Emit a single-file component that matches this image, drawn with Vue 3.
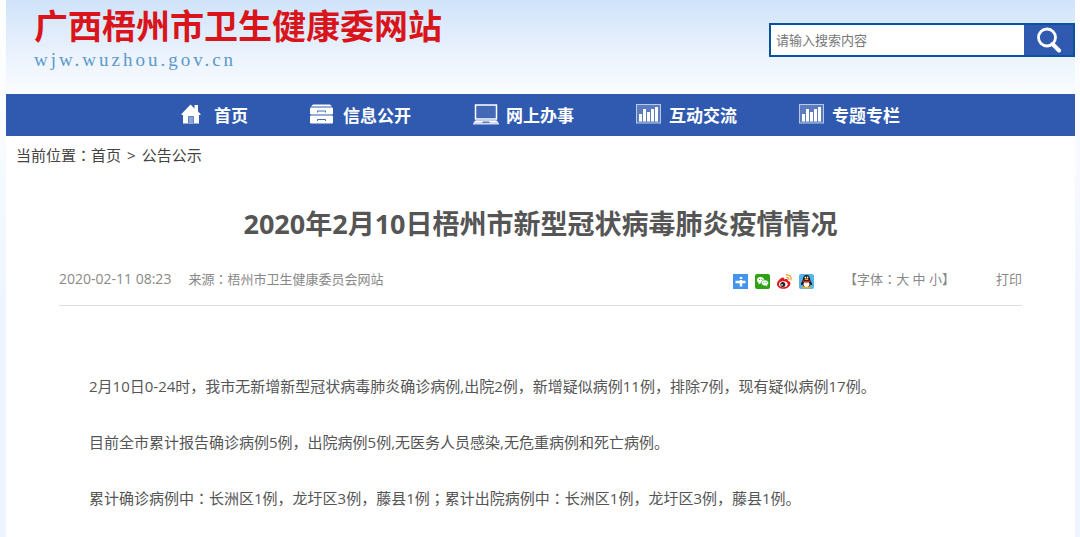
<script setup>
import { ref } from 'vue'

const keyword = ref('')
const nav = [
  { label: '首页', icon: 'home' },
  { label: '信息公开', icon: 'drawer' },
  { label: '网上办事', icon: 'laptop' },
  { label: '互动交流', icon: 'chart' },
  { label: '专题专栏', icon: 'chart' },
]
const paragraphs = [
  '2月10日0-24时，我市无新增新型冠状病毒肺炎确诊病例,出院2例，新增疑似病例11例，排除7例，现有疑似病例17例。',
  '目前全市累计报告确诊病例5例，出院病例5例,无医务人员感染,无危重病例和死亡病例。',
  '累计确诊病例中：长洲区1例，龙圩区3例，藤县1例；累计出院病例中：长洲区1例，龙圩区3例，藤县1例。',
].map((text) => text.split(/([：；])/))
</script>

<template>
  <div class="page">
    <header class="banner">
      <div class="brand">
        <h2 class="site-name">广西梧州市卫生健康委网站</h2>
        <p class="site-url">wjw.wuzhou.gov.cn</p>
      </div>
      <form class="search" @submit.prevent>
        <input v-model="keyword" type="text" aria-label="请输入搜索内容" placeholder="请输入搜索内容" />
        <button type="submit" aria-label="搜索">
          <svg width="26" height="26" viewBox="0 0 26 26" fill="none" stroke="#fff">
            <circle cx="11" cy="10.5" r="8.5" stroke-width="2.8" />
            <path d="M16.5 17l6.5 6.5" stroke-width="4" stroke-linecap="round" />
          </svg>
        </button>
      </form>
    </header>

    <nav class="nav">
      <a v-for="item in nav" :key="item.label" href="#" class="nav-item">
        <span class="nav-icon">
          <svg v-if="item.icon === 'home'" width="20" height="20" viewBox="0 0 20 20">
            <path d="M0.500 10L9.500 0.500l4 4V1h3.500v6.500l2.500 2.500v1H18v8.500H2V11H0.500z" fill="#fff" />
            <path d="M7.500 19.500V12.500h5v7" fill="#8ba3d5" stroke="#5f80c4" />
          </svg>
          <svg v-else-if="item.icon === 'drawer'" width="23" height="20" viewBox="0 0 23 20">
            <path d="M3 0.500h17l2 2H1z" fill="#fff" />
            <rect y="3.500" width="23" height="7" rx="1" fill="#fff" />
            <rect y="11.500" width="23" height="8" rx="1" fill="#fff" />
            <path d="M7.500 8.500V7h8v1.500M7.500 17V15.500h8V17" fill="none" stroke="#4568b2" />
          </svg>
          <svg v-else-if="item.icon === 'laptop'" width="26" height="21" viewBox="0 0 26 21">
            <rect x="2.500" y="1" width="21" height="14" fill="#4368b5" stroke="#fff" stroke-width="1.500" />
            <path d="M2 16.500h22l2 3v1H0v-1z" fill="#d5ddef" />
            <path d="M3 16.500h20l1 1.500H2z" fill="#fff" />
            <path d="M10 17.500h6l1 1.500H9z" fill="#5776b8" />
          </svg>
          <svg v-else width="25" height="20" viewBox="0 0 25 20">
            <rect x="0.500" y="0.500" width="24" height="18.500" fill="#5d7cc0" stroke="#b9c8e8" />
            <path d="M3 10h3v7.500H3zM7 5h3v12.500H7zM11 8h3v9.500h-3zM15 5h3v12.500h-3zM19 3h3v14.500h-3z" fill="#fff" />
          </svg>
        </span>
        {{ item.label }}
      </a>
    </nav>

    <main>
      <div class="crumbs">
        当前位置<span class="mid">：</span><a href="#">首页</a><span class="sep">&gt;</span><a href="#">公告公示</a>
      </div>
      <article>
        <h1>2020年2月10日梧州市新型冠状病毒肺炎疫情情况</h1>
        <div class="meta">
          <time>2020-02-11 08:23</time>
          <span class="source">来源<span class="mid">：</span>梧州市卫生健康委员会网站</span>
          <div class="share">
            <a href="#" aria-label="更多">
              <svg width="15" height="15" viewBox="0 0 15 15">
                <rect width="15" height="15" fill="#4494ee" />
                <path d="M2.500 8h10M8 3v2M8 6v6.500" stroke="#fff" stroke-width="2.500" />
              </svg>
            </a>
            <a href="#" aria-label="微信">
              <svg width="15" height="15" viewBox="0 0 15 15">
                <rect width="15" height="15" rx="2" fill="#2ba313" />
                <path d="M2 6a3.600 3 0 1 1 4 3l-2.500 1.500.200-1.700A3.500 3 0 0 1 2 6z" fill="#fff" />
                <path d="M6.300 9a3.600 2.900 0 1 1 6 2l.200 1.700-1.800-.900A3.600 2.900 0 0 1 6.300 9z" fill="#fff" stroke="#2ba313" stroke-width=".6" />
                <circle cx="4.300" cy="5.500" r=".6" fill="#2ba313" />
                <circle cx="6.800" cy="5.500" r=".6" fill="#2ba313" />
                <circle cx="8.800" cy="8.500" r=".5" fill="#2ba313" />
                <circle cx="11" cy="8.500" r=".5" fill="#2ba313" />
              </svg>
            </a>
            <a href="#" aria-label="微博">
              <svg width="15" height="15" viewBox="0 0 15 15">
                <path d="M0 10c0-3 4-6.500 6-6.500 1.200 0 1.500 1 1.200 2 2-.8 4-.600 3.700 1.200 1.600.500 2.500 1.200 2.500 2.800 0 3-3.400 5.300-7 5.300S0 13 0 10z" fill="#e0191e" />
                <ellipse cx="6.300" cy="10.200" rx="4.300" ry="3" fill="#fff" />
                <circle cx="5.800" cy="10.500" r="2.500" fill="#222" />
                <circle cx="5" cy="10.900" r=".8" fill="#fff" />
                <path d="M8.800 1c3.500-.8 6 2 5 5.300M9.300 3.500c1.700-.400 2.800.8 2.300 2.300" fill="none" stroke="#efa02c" stroke-width="1.300" />
              </svg>
            </a>
            <a href="#" aria-label="QQ">
              <svg width="15" height="15" viewBox="0 0 15 15">
                <rect width="15" height="15" rx="2" fill="#54b4ec" />
                <path d="M7.500 1C5 1 4 2.800 4 5c0 1-2.200 3.500-2 6 .8.400 1.500-.600 1.500-.600L5 13h5l1.500-2.600s.7 1 1.500.600c.2-2.500-2-5-2-6 0-2.200-1-4-3.500-4z" fill="#18191d" />
                <ellipse cx="7.500" cy="10.300" rx="2.900" ry="2.800" fill="#fff" />
                <ellipse cx="6.400" cy="3.500" rx=".8" ry="1.100" fill="#fff" />
                <ellipse cx="8.600" cy="3.500" rx=".8" ry="1.100" fill="#fff" />
                <ellipse cx="7.500" cy="5.400" rx="2" ry=".8" fill="#f6a623" />
                <path d="M3.700 7q3.800 2 7.600 0" fill="none" stroke="#e22b20" stroke-width="1.500" />
                <path d="M3 13.500c0-1 3.500-1.500 4.500 0 1-1.500 4.500-1 4.500 0 0 1.400-9 1.400-9 0z" fill="#f6a623" />
              </svg>
            </a>
          </div>
          <span class="sizes">【字体<span class="mid">：</span><a href="#">大</a> <a href="#">中</a> <a href="#">小</a>】</span>
          <a href="#" class="print">打印</a>
        </div>
        <div class="content">
          <p v-for="(parts, i) in paragraphs" :key="i">
            <template v-for="(part, j) in parts" :key="j"><span :class="{ mid: j % 2 === 1 }">{{ part }}</span></template>
          </p>
        </div>
      </article>
    </main>
  </div>
</template>

<style>
body {
  background: linear-gradient(#fff 0, #fafcff 110px, #eff5ff 300px);
}
</style>

<style scoped>
.page {
  margin: 0 5px 0 6px;
  min-height: 100vh;
  background: #fff;
  color: #555;
  font-family: "Open Sans", "Noto Sans CJK SC", sans-serif;
}
h1, h2, p { margin: 0; }
a { color: inherit; text-decoration: none; }
.mid { font-family: "Noto Sans CJK JP", sans-serif; }

.banner {
  display: flex;
  justify-content: space-between;
  align-items: flex-start;
  height: 94px;
  background: linear-gradient(#cfe3fa, #ebf3fd 55px, #fafcff);
}
.brand { padding: 6px 0 0 28px; }
.site-name {
  color: #d9141a;
  font-size: 34px;
  font-weight: 700;
  line-height: 40px;
}
.site-url {
  color: #5b99cb;
  font-family: "Liberation Serif", serif;
  font-size: 19px;
  letter-spacing: 3px;
  line-height: 28px;
}
.search {
  display: flex;
  box-sizing: border-box;
  width: 306px;
  height: 34px;
  margin-top: 23px;
  border: 2px solid #08549c;
}
.search input {
  flex: 1;
  min-width: 0;
  padding: 0 5px;
  border: 0;
  outline: 0;
  background: #fff;
  color: #555;
  font-family: inherit;
  font-size: 13px;
}
.search input::placeholder { color: #777; opacity: 1; }
.search button {
  display: flex;
  align-items: center;
  justify-content: center;
  width: 49px;
  padding: 0;
  border: 0;
  background: #2f5aaf;
}

.nav {
  display: flex;
  justify-content: center;
  gap: 62px;
  box-sizing: border-box;
  height: 42px;
  padding-bottom: 2px;
  background: #2f5aaf;
}
.nav-item {
  display: flex;
  align-items: center;
  color: #fff;
  font-size: 17px;
  font-weight: 700;
}
.nav-icon { display: flex; width: 33px; }

.crumbs {
  padding: 8px 10px;
  color: #444;
  font-size: 15px;
  line-height: 22px;
}
.sep { margin: 0 6px; }
article { padding: 0 53px; }
h1 {
  padding-top: 30px;
  font-size: 27px;
  line-height: 40px;
  text-align: center;
}
.meta {
  display: flex;
  align-items: center;
  height: 53px;
  padding-top: 8px;
  border-bottom: 1px solid #ddd;
  color: #888;
  font-size: 13px;
}
.meta time { font-size: 14px; }
.source { margin-left: 17px; }
.share {
  display: flex;
  gap: 7px;
  margin-left: auto;
  padding-top: 6px;
}
.share a { display: flex; }
.sizes { margin-left: 30px; }
.print { margin-left: 41px; }
.content {
  padding: 66px 30px 0;
  font-size: 15px;
  line-height: 28px;
}
.content p { margin-bottom: 28px; }
</style>
